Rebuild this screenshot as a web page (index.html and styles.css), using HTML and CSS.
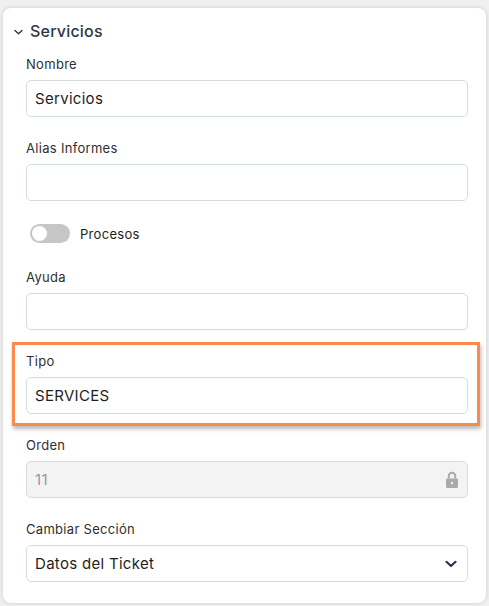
FILE: index.html
```html
<!DOCTYPE html>
<html lang="es">
<head>
<meta charset="utf-8">
<title>Servicios</title>
<link rel="stylesheet" href="styles.css">
</head>
<body>
<div class="card">
  <div class="header">
    <svg class="hchev" width="9" height="6" viewBox="0 0 9 6"><path d="M1 1.5 L4.5 4.8 L8 1.5" fill="none" stroke="#2d3748" stroke-width="1.4" stroke-linecap="round" stroke-linejoin="round"/></svg>
    <span class="title">Servicios</span>
  </div>
  <div class="body">
    <div class="field">
      <div class="label">Nombre</div>
      <div class="input">Servicios</div>
    </div>
    <div class="field">
      <div class="label">Alias Informes</div>
      <div class="input"></div>
    </div>
    <div class="toggle-row">
      <span class="toggle"><span class="knob"></span></span>
      <span class="toggle-label">Procesos</span>
    </div>
    <div class="field">
      <div class="label">Ayuda</div>
      <div class="input"></div>
    </div>
    <div class="field highlighted">
      <div class="label">Tipo</div>
      <div class="input">SERVICES</div>
      <div class="highlight"></div>
    </div>
    <div class="field">
      <div class="label">Orden</div>
      <div class="input disabled">
        <span>11</span>
        <svg class="lock" width="12" height="17" viewBox="0 0 12 17"><path d="M2.8 7.5 V5 a3.2 3.2 0 0 1 6.4 0 V7.5" fill="none" stroke="#a9a9a9" stroke-width="2"/><rect x="0" y="7.5" width="12" height="9.5" rx="1.5" fill="#a9a9a9"/><rect x="5" y="10.8" width="2" height="2.6" rx="0.8" fill="#f3f3f3"/></svg>
      </div>
    </div>
    <div class="field">
      <div class="label">Cambiar Sección</div>
      <div class="input select">
        <span>Datos del Ticket</span>
        <svg class="schev" width="12" height="8" viewBox="0 0 12 8"><path d="M1.5 1.8 L6 6 L10.5 1.8" fill="none" stroke="#2d3748" stroke-width="2.2" stroke-linecap="round" stroke-linejoin="round"/></svg>
      </div>
    </div>
  </div>
</div>
</body>
</html>
```
FILE: styles.css
```css
* { box-sizing: border-box; }
html, body { margin: 0; padding: 0; }
body {
  background: #f0f0f0;
  font-family: Inter, "Noto Sans", sans-serif;
  width: 489px;
  height: 606px;
  overflow: hidden;
}
.card {
  margin: 8px 3px 0 3px;
  width: 483px;
  height: 595px;
  background: #fff;
  border-radius: 8px;
  box-shadow: 0 0 4px rgba(0,0,0,0.16);
  padding: 11px 18px 0 11px;
}
.header {
  display: flex;
  align-items: center;
  height: 24px;
}
.hchev { margin-right: 7px; margin-top: 1px; }
.title {
  font-size: 16px;
  font-weight: 500;
  letter-spacing: 0.2px;
  color: #2d3748;
}
.body {
  padding-left: 12px;
  margin-top: 11px;
}
.field {
  position: relative;
  margin-bottom: 21px;
}
.label {
  font-size: 13px;
  line-height: 20px;
  letter-spacing: 0.3px;
  color: #2f2f2f;
  margin-bottom: 6px;
}
.input {
  height: 37px;
  border: 1px solid #d6dedd;
  border-radius: 5px;
  padding: 0 9px 0 8px;
  display: flex;
  align-items: center;
  justify-content: space-between;
  font-size: 15px;
  letter-spacing: 0.3px;
  color: #1e1e1e;
  background: #fff;
}
.input.disabled {
  background: #f3f3f3;
  color: #9a9a9a;
}
.input.select { padding-right: 10px; }
.toggle-row {
  display: flex;
  align-items: center;
  height: 23px;
  padding-left: 4px;
  margin-bottom: 22px;
}
.toggle {
  position: relative;
  width: 40px;
  height: 19px;
  border-radius: 10px;
  background: #c6c6c6;
}
.knob {
  position: absolute;
  left: 2px;
  top: 2px;
  width: 15px;
  height: 15px;
  border-radius: 50%;
  background: #fff;
}
.toggle-label {
  margin-left: 10px;
  font-size: 13px;
  letter-spacing: 0.3px;
  color: #1e1e1e;
}
.highlight {
  position: absolute;
  left: -14px;
  right: -12px;
  top: -9px;
  bottom: -12px;
  border: 3px solid #fc8a4f;
  box-shadow: 1px 3px 4px rgba(0,0,0,0.28);
  pointer-events: none;
}
```
